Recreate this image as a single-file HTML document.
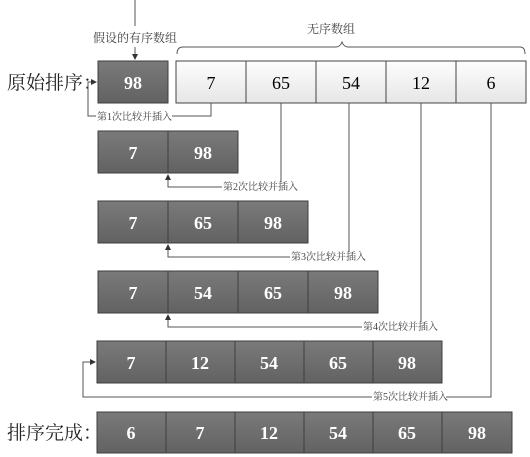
<!DOCTYPE html>
<html><head><meta charset="utf-8"><style>
html,body{margin:0;padding:0;background:#fff;width:530px;height:457px;overflow:hidden}
svg{display:block}
.g{fill:url(#gg);stroke:#3e3e3e;stroke-width:1}
.w{fill:url(#wg);stroke:#444;stroke-width:1}
.n{font-family:"Liberation Serif","DejaVu Serif",serif;font-size:18px;text-anchor:middle}
.nw{fill:#fff;font-weight:bold}
.l{font-family:"Liberation Serif","Noto Serif CJK SC",serif;font-size:10px;fill:#444}
.big{font-family:"Liberation Serif","Noto Serif CJK SC",serif;font-size:19px;fill:#222}
.ln{stroke:#555;stroke-width:1;fill:none}
</style></head><body>
<svg width="530" height="457" viewBox="0 0 530 457" xmlns="http://www.w3.org/2000/svg">
<defs>
<linearGradient id="gg" x1="0" y1="0" x2="0" y2="1"><stop offset="0" stop-color="#7a7a7a"/><stop offset="1" stop-color="#626262"/></linearGradient>
<linearGradient id="wg" x1="0" y1="0" x2="0" y2="1"><stop offset="0" stop-color="#fdfdfd"/><stop offset="1" stop-color="#e6e6e6"/></linearGradient>
<marker id="ar" markerWidth="6" markerHeight="6" refX="5" refY="3" orient="auto" markerUnits="userSpaceOnUse"><path d="M0,0 L6,3 L0,6 z" fill="#333"/></marker>
</defs>
<line x1="135" y1="0" x2="135" y2="26" class="ln"/>
<text x="135" y="42" class="l" text-anchor="middle" style="font-size:12px">假设的有序数组</text>
<line x1="135" y1="47" x2="135" y2="59" class="ln" marker-end="url(#ar)"/>
<text x="331" y="33" class="l" style="font-size:12px" text-anchor="middle">无序数组</text>
<path d="M177,54 Q177,47 183,47 L336,47 Q340,47 342,42 Q344,47 348,47 L520,47 Q525,47 525,54" class="ln"/>
<text x="7" y="89" class="big">原始排序：</text>
<text x="7" y="439" class="big">排序完成：</text>
<rect x="98" y="61" width="70" height="42" class="g"/><text x="133" y="89" class="n nw">98</text>
<rect x="176" y="61" width="70" height="42" class="w"/><text x="211" y="89" class="n">7</text>
<rect x="246" y="61" width="70" height="42" class="w"/><text x="281" y="89" class="n">65</text>
<rect x="316" y="61" width="70" height="42" class="w"/><text x="351" y="89" class="n">54</text>
<rect x="386" y="61" width="70" height="42" class="w"/><text x="421" y="89" class="n">12</text>
<rect x="456" y="61" width="70" height="42" class="w"/><text x="491" y="89" class="n">6</text>
<path d="M211,103 V116 H172 M96,116 H88 V82 H96" class="ln" marker-end="url(#ar)"/>
<text x="97" y="120" class="l">第1次比较并插入</text>
<rect x="98" y="131" width="70" height="42" class="g"/><text x="133" y="159" class="n nw">7</text>
<rect x="168" y="131" width="70" height="42" class="g"/><text x="203" y="159" class="n nw">98</text>
<path d="M281,103 V182 M222,187 H168 V175" class="ln" marker-end="url(#ar)"/>
<text x="223" y="190" class="l">第2次比较并插入</text>
<rect x="98" y="201" width="70" height="42" class="g"/><text x="133" y="229" class="n nw">7</text>
<rect x="168" y="201" width="70" height="42" class="g"/><text x="203" y="229" class="n nw">65</text>
<rect x="238" y="201" width="70" height="42" class="g"/><text x="273" y="229" class="n nw">98</text>
<path d="M349,103 V252 M290,257 H168 V245" class="ln" marker-end="url(#ar)"/>
<text x="291" y="260" class="l">第3次比较并插入</text>
<rect x="98" y="271" width="70" height="42" class="g"/><text x="133" y="299" class="n nw">7</text>
<rect x="168" y="271" width="70" height="42" class="g"/><text x="203" y="299" class="n nw">54</text>
<rect x="238" y="271" width="70" height="42" class="g"/><text x="273" y="299" class="n nw">65</text>
<rect x="308" y="271" width="70" height="42" class="g"/><text x="343" y="299" class="n nw">98</text>
<path d="M421,103 V322 M362,327 H168 V315" class="ln" marker-end="url(#ar)"/>
<text x="363" y="330" class="l">第4次比较并插入</text>
<rect x="97" y="341" width="69" height="42" class="g"/><text x="131" y="369" class="n nw">7</text>
<rect x="166" y="341" width="69" height="42" class="g"/><text x="200" y="369" class="n nw">12</text>
<rect x="235" y="341" width="69" height="42" class="g"/><text x="269" y="369" class="n nw">54</text>
<rect x="304" y="341" width="69" height="42" class="g"/><text x="338" y="369" class="n nw">65</text>
<rect x="373" y="341" width="69" height="42" class="g"/><text x="407" y="369" class="n nw">98</text>
<path d="M491,103 V397 H446 M372,397 H83 V362 H95" class="ln" marker-end="url(#ar)"/>
<text x="373" y="400" class="l">第5次比较并插入</text>
<rect x="97" y="412" width="69" height="41" class="g"/><text x="131" y="439" class="n nw">6</text>
<rect x="166" y="412" width="69" height="41" class="g"/><text x="200" y="439" class="n nw">7</text>
<rect x="235" y="412" width="69" height="41" class="g"/><text x="269" y="439" class="n nw">12</text>
<rect x="304" y="412" width="69" height="41" class="g"/><text x="338" y="439" class="n nw">54</text>
<rect x="373" y="412" width="69" height="41" class="g"/><text x="407" y="439" class="n nw">65</text>
<rect x="442" y="412" width="70" height="41" class="g"/><text x="477" y="439" class="n nw">98</text>
</svg>
</body></html>
